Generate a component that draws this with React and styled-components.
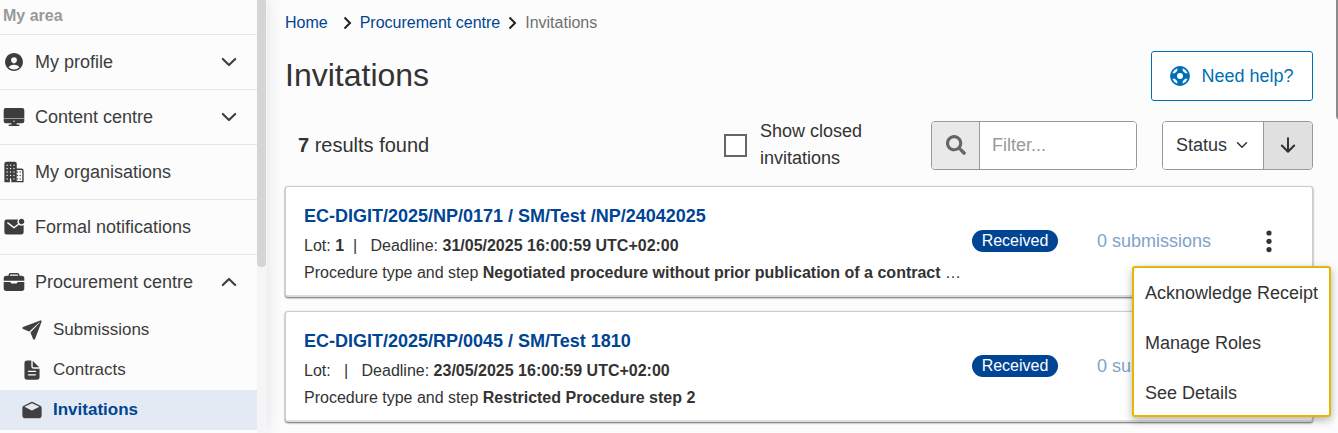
import React, { useState } from 'react';
import styled, { createGlobalStyle } from 'styled-components';
import {
  IoPersonCircle,
  IoDesktop,
  IoBusiness,
  IoMailUnread,
  IoBriefcase,
  IoPaperPlane,
  IoDocumentText,
  IoMailOpen,
  IoChevronDown,
  IoChevronUp,
  IoArrowDown,
} from 'react-icons/io5';
import { FaSearch } from 'react-icons/fa';

const GlobalStyle = createGlobalStyle`
  * {
    box-sizing: border-box;
  }

  body {
    margin: 0;
    background-color: #fcfcfc;
    color: #333;
    font-family: "Liberation Sans", Arial, sans-serif;
    font-size: 16px;
    overflow: hidden;
  }

  button, input {
    font-family: inherit;
    color: inherit;
  }

  a {
    text-decoration: none;
  }
`;

const Page = styled.div`
  display: flex;
  height: 100vh;
  overflow: hidden;
`;

const Sidebar = styled.aside`
  display: flex;
  flex: none;
  width: 267px;
  box-shadow: 0 0 14px rgba(60, 80, 130, 0.16);
`;

const Nav = styled.nav`
  flex: 1;
`;

const ScrollTrack = styled.div`
  width: 10px;
  background-color: #f5f5f5;
`;

const ScrollThumb = styled.div`
  width: 9px;
  height: 267px;
  background-color: #d5d5d5;
  border-radius: 0 0 4px 4px;
`;

const AreaTitle = styled.div`
  height: 34px;
  padding: 7px 3px;
  line-height: 18px;
  font-weight: bold;
  color: #999;
`;

const NavItem = styled.a`
  display: flex;
  align-items: center;
  height: 55px;
  padding: 0 17px 0 3px;
  border-top: 1px solid #e6e6e6;
  color: #3d3d3d;
  font-size: 18px;

  span {
    flex: 1;
    margin-left: 10px;
  }
`;

const SubList = styled.div`
  margin-top: 1px;
`;

const SubItem = styled.a`
  display: flex;
  align-items: center;
  gap: 10px;
  height: 40px;
  padding-left: 21px;
  background-color: ${({ $active }) => ($active ? '#e4eaf3' : 'transparent')};
  font-size: 17px;
  font-weight: ${({ $active }) => ($active ? 'bold' : 'normal')};

  span {
    color: ${({ $active }) => ($active ? '#004494' : '#3d3d3d')};
  }

  svg {
    color: #404040;
  }
`;

const Main = styled.main`
  flex: 1;
  min-width: 0;
  padding: 13px 16px 12px 18px;
`;

const ScrollBar = styled.div`
  width: 9px;
  overflow: hidden;

  div {
    width: 9px;
    height: 120px;
    margin-left: 7px;
    background-color: #8b8b8b;
    border-radius: 0 0 4px 4px;
  }
`;

const Breadcrumb = styled.nav`
  display: flex;
  align-items: center;
  gap: 8px;
  line-height: 20px;

  a {
    color: #004494;
  }

  a:first-child {
    margin-right: 7px;
  }

  span {
    color: #707070;
  }
`;

const TitleRow = styled.div`
  display: flex;
  justify-content: space-between;
  margin-top: 18px;
`;

const Title = styled.h1`
  margin: 6px 0 0;
  font-size: 32px;
  font-weight: normal;
  line-height: 36px;
`;

const HelpButton = styled.button`
  display: flex;
  align-items: center;
  justify-content: center;
  gap: 11px;
  width: 162px;
  height: 50px;
  padding: 0;
  border: 1px solid #006fb4;
  border-radius: 3px;
  background-color: #fff;
  color: #006fb4;
  font-size: 18px;
`;

const Toolbar = styled.div`
  display: flex;
  align-items: center;
  margin-top: 17px;
  font-size: 18px;
`;

const ResultCount = styled.div`
  flex: 1;
  padding-left: 13px;
  font-size: 20px;
`;

const ClosedToggle = styled.label`
  display: flex;
  align-items: center;
  gap: 13px;
  width: 207px;
  line-height: 27px;

  span {
    width: 120px;
  }
`;

const Checkbox = styled.input`
  appearance: none;
  flex: none;
  width: 23px;
  height: 23px;
  margin: 0;
  border: 2px solid #666;
  background-color: #fff;

  &:checked {
    background-color: #004494;
  }
`;

const FilterBox = styled.label`
  display: flex;
  width: 206px;
  height: 49px;
  margin-right: 25px;
  border: 1px solid #999;
  border-radius: 4px;
  background-color: #fff;
  overflow: hidden;
`;

const FilterIcon = styled.span`
  display: flex;
  align-items: center;
  justify-content: center;
  flex: none;
  width: 48px;
  border-right: 1px solid #999;
  background-color: #e9e9e9;
  color: #666;
`;

const FilterInput = styled.input`
  min-width: 0;
  flex: 1;
  padding: 0 12px;
  border: 0;
  outline: none;
  font-size: 18px;

  &::placeholder {
    color: #999;
  }
`;

const SortGroup = styled.div`
  display: flex;
  width: 151px;
  height: 49px;
  border: 1px solid #999;
  border-radius: 4px;
  overflow: hidden;
`;

const SortButton = styled.button`
  display: flex;
  align-items: center;
  justify-content: center;
  gap: 7px;
  flex: ${({ $icon }) => ($icon ? '0 0 49px' : '1')};
  padding: 0;
  border: 0;
  border-left: ${({ $icon }) => ($icon ? '1px solid #999' : '0')};
  background-color: ${({ $icon }) => ($icon ? '#e0e0e0' : '#fff')};
  font-size: 18px;
`;

const List = styled.div`
  display: flex;
  flex-direction: column;
  gap: 14px;
  margin-top: 14px;
`;

const Card = styled.article`
  position: relative;
  display: flex;
  padding: 17px 18px 9px;
  border: 1px solid #ccc;
  border-bottom: 2px solid #ddd;
  border-radius: 3px;
  background-color: #fff;
  box-shadow: 0 1px 2px rgba(0, 0, 0, 0.6);
`;

const CardBody = styled.div`
  width: 660px;
  margin-right: 8px;
`;

const CardTitle = styled.a`
  display: block;
  margin-bottom: 4px;
  color: #004494;
  font-size: 18px;
  font-weight: bold;
  line-height: 24px;
`;

const Line = styled.div`
  line-height: 27px;
  white-space: pre;
`;

const CardSide = styled.div`
  display: flex;
  align-items: center;
  flex: 1;
  height: 24px;
  margin-top: 25px;
`;

const Badge = styled.span`
  width: 86px;
  margin-right: 39px;
  border-radius: 11px;
  background-color: #004494;
  color: #fff;
  line-height: 22px;
  text-align: center;
`;

const Submissions = styled.span`
  flex: 1;
  color: #80a2ca;
  font-size: 18px;
`;

const MoreButton = styled.button`
  width: 18px;
  height: 24px;
  margin-right: 16px;
  padding: 0;
  border: 0;
  background: none;
`;

const Menu = styled.div`
  position: absolute;
  z-index: 1;
  top: 79px;
  right: -19px;
  display: flex;
  flex-direction: column;
  gap: 30px;
  width: 199px;
  padding: 15px 0 12px;
  border: 2px solid #e5b700;
  border-radius: 3px;
  background-color: #fff;
  box-shadow: 0 3px 8px rgba(0, 0, 0, 0.3);
`;

const MenuItem = styled.button`
  padding: 0 11px;
  border: 0;
  background: none;
  font-size: 18px;
  line-height: 20px;
  text-align: left;
  white-space: nowrap;
`;

const navItems = [
  { label: 'My profile', Icon: IoPersonCircle, Arrow: IoChevronDown },
  { label: 'Content centre', Icon: IoDesktop, Arrow: IoChevronDown },
  { label: 'My organisations', Icon: IoBusiness },
  { label: 'Formal notifications', Icon: IoMailUnread },
  { label: 'Procurement centre', Icon: IoBriefcase, Arrow: IoChevronUp },
];

const subItems = [
  { label: 'Submissions', Icon: IoPaperPlane },
  { label: 'Contracts', Icon: IoDocumentText },
  { label: 'Invitations', Icon: IoMailOpen, active: true },
];

const invitations = [
  {
    title: 'EC-DIGIT/2025/NP/0171 / SM/Test /NP/24042025',
    lot: '1',
    deadline: '31/05/2025 16:00:59 UTC+02:00',
    step: 'Negotiated procedure without prior publication of a contract',
    more: true,
  },
  {
    title: 'EC-DIGIT/2025/RP/0045 / SM/Test 1810',
    lot: '',
    deadline: '23/05/2025 16:00:59 UTC+02:00',
    step: 'Restricted Procedure step 2',
  },
];

const Separator = () => (
  <svg width="9" height="14" viewBox="0 0 9 14" fill="none" stroke="#222" strokeWidth="2" aria-hidden="true">
    <path d="M1.5 1.5L7 7L1.5 12.5" />
  </svg>
);

const LifeRing = () => (
  <svg width="20" height="20" viewBox="0 0 20 20" fill="none" stroke="currentColor" aria-hidden="true">
    <circle cx="10" cy="10" r="9" strokeWidth="1.8" />
    <circle cx="10" cy="10" r="4.4" strokeWidth="2.8" />
    <path d="M10 .8v5.4M10 13.8v5.4M.8 10h5.4M13.8 10h5.4" strokeWidth="5.4" />
  </svg>
);

const Dots = () => (
  <svg width="18" height="24" viewBox="0 0 18 24" fill="currentColor" aria-hidden="true">
    <circle cx="9" cy="4" r="2.6" />
    <circle cx="9" cy="12.3" r="2.6" />
    <circle cx="9" cy="20.6" r="2.6" />
  </svg>
);

function Invitation({ item, menuOpen, onToggle }) {
  return (
    <Card>
      <CardBody>
        <CardTitle href="#invitation">{item.title}</CardTitle>
        <Line>
          Lot: <b>{item.lot}</b>{'  |   '}Deadline: <b>{item.deadline}</b>
        </Line>
        <Line>
          Procedure type and step <b>{item.step}</b>{item.more && ' …'}
        </Line>
      </CardBody>
      <CardSide>
        <Badge>Received</Badge>
        <Submissions>0 submissions</Submissions>
        <MoreButton aria-label="Actions" onClick={onToggle}>
          <Dots />
        </MoreButton>
      </CardSide>
      {menuOpen && (
        <Menu>
          <MenuItem>Acknowledge Receipt</MenuItem>
          <MenuItem>Manage Roles</MenuItem>
          <MenuItem>See Details</MenuItem>
        </Menu>
      )}
    </Card>
  );
}

function App() {
  const [openMenu, setOpenMenu] = useState(0);
  const [showClosed, setShowClosed] = useState(false);

  return (
    <Page>
      <GlobalStyle />
      <Sidebar>
        <Nav>
          <AreaTitle>My area</AreaTitle>
          {navItems.map(({ label, Icon, Arrow }) => (
            <NavItem href="#nav" key={label}>
              <Icon size={22} />
              <span>{label}</span>
              {Arrow && <Arrow size={22} />}
            </NavItem>
          ))}
          <SubList>
            {subItems.map(({ label, Icon, active }) => (
              <SubItem href="#sub" key={label} $active={active}>
                <Icon size={22} />
                <span>{label}</span>
              </SubItem>
            ))}
          </SubList>
        </Nav>
        <ScrollTrack>
          <ScrollThumb />
        </ScrollTrack>
      </Sidebar>
      <Main>
        <Breadcrumb>
          <a href="#home">Home</a>
          <Separator />
          <a href="#procurement">Procurement centre</a>
          <Separator />
          <span>Invitations</span>
        </Breadcrumb>
        <TitleRow>
          <Title>Invitations</Title>
          <HelpButton>
            <LifeRing />
            Need help?
          </HelpButton>
        </TitleRow>
        <Toolbar>
          <ResultCount>
            <b>7</b> results found
          </ResultCount>
          <ClosedToggle>
            <Checkbox
              type="checkbox"
              checked={showClosed}
              onChange={() => setShowClosed(!showClosed)}
            />
            <span>Show closed invitations</span>
          </ClosedToggle>
          <FilterBox>
            <FilterIcon>
              <FaSearch size={20} />
            </FilterIcon>
            <FilterInput placeholder="Filter..." aria-label="Filter" />
          </FilterBox>
          <SortGroup>
            <SortButton>
              Status <IoChevronDown size={16} />
            </SortButton>
            <SortButton $icon aria-label="Sort descending">
              <IoArrowDown size={22} />
            </SortButton>
          </SortGroup>
        </Toolbar>
        <List>
          {invitations.map((item, i) => (
            <Invitation
              key={item.title}
              item={item}
              menuOpen={openMenu === i}
              onToggle={() => setOpenMenu(openMenu === i ? null : i)}
            />
          ))}
        </List>
      </Main>
      <ScrollBar>
        <div />
      </ScrollBar>
    </Page>
  );
}

export default App;
